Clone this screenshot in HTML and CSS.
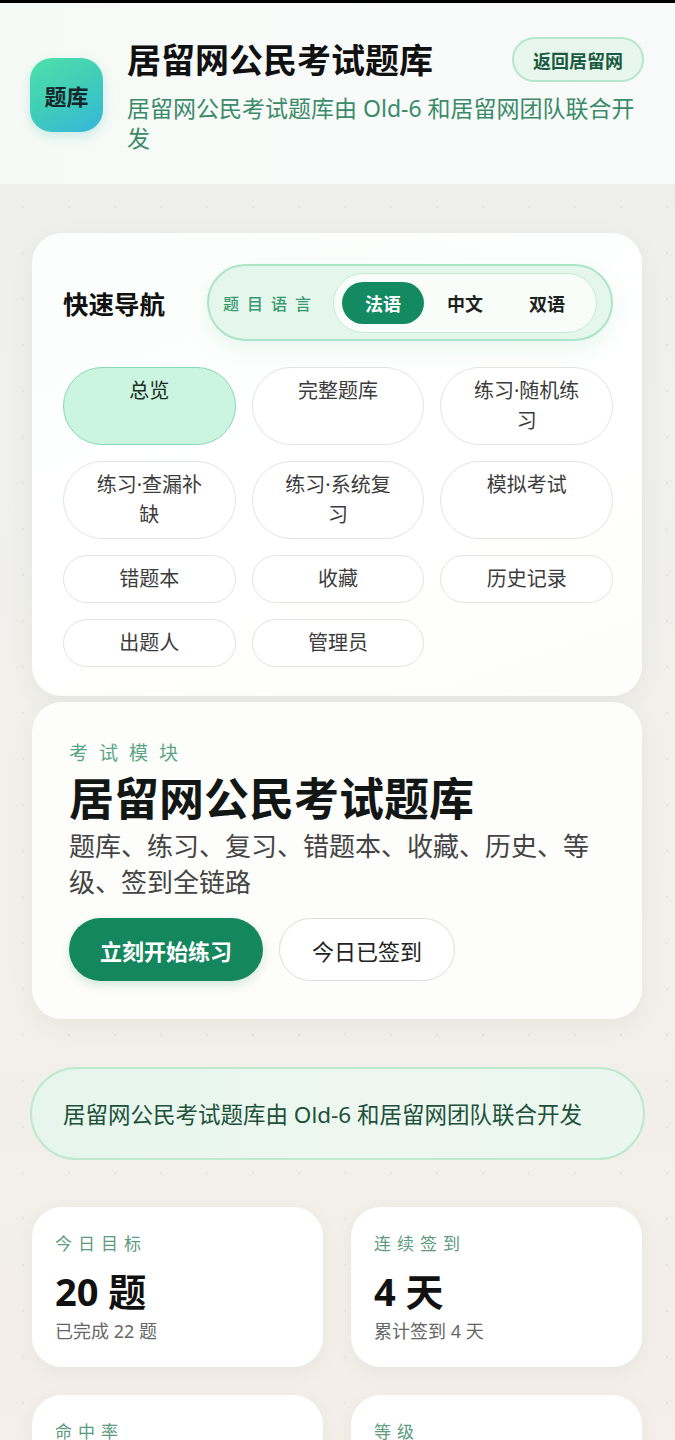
FILE: index.html
```html
<!DOCTYPE html>
<html lang="zh-CN">
<head>
    <meta charset="UTF-8">
    <meta name="viewport" content="width=device-width, initial-scale=1.0">
    <title>居留网公民考试题库</title>
    <link rel="stylesheet" href="styles.css">
</head>
<body>
    <header class="site-header">
        <div class="logo">题库</div>
        <div class="header-text">
            <div class="title-row">
                <h1>居留网公民考试题库</h1>
                <a class="back-btn" href="#">返回居留网</a>
            </div>
            <p class="subtitle">居留网公民考试题库由 Old-6 和居留网团队联合开发</p>
        </div>
    </header>

    <main class="page">
        <section class="card nav-card">
            <div class="nav-head">
                <h2>快速导航</h2>
                <div class="lang-box">
                    <span class="lang-label">题目语言</span>
                    <div class="lang-switch">
                        <button class="lang-btn active">法语</button>
                        <button class="lang-btn">中文</button>
                        <button class="lang-btn">双语</button>
                    </div>
                </div>
            </div>
            <div class="nav-grid">
                <a class="nav-btn active" href="#">总览</a>
                <a class="nav-btn" href="#">完整题库</a>
                <a class="nav-btn" href="#">练习·随机练习</a>
                <a class="nav-btn" href="#">练习·查漏补缺</a>
                <a class="nav-btn" href="#">练习·系统复习</a>
                <a class="nav-btn" href="#">模拟考试</a>
                <a class="nav-btn" href="#">错题本</a>
                <a class="nav-btn" href="#">收藏</a>
                <a class="nav-btn" href="#">历史记录</a>
                <a class="nav-btn" href="#">出题人</a>
                <a class="nav-btn" href="#">管理员</a>
            </div>
        </section>

        <section class="card hero-card">
            <div class="hero-label">考试模块</div>
            <h2 class="hero-title">居留网公民考试题库</h2>
            <p class="hero-desc">题库、练习、复习、错题本、收藏、历史、等级、签到全链路</p>
            <div class="hero-actions">
                <button class="btn-primary">立刻开始练习</button>
                <button class="btn-outline">今日已签到</button>
            </div>
        </section>

        <div class="banner">居留网公民考试题库由 Old-6 和居留网团队联合开发</div>

        <section class="stats">
            <div class="stat-card">
                <div class="stat-label">今日目标</div>
                <div class="stat-value">20 题</div>
                <div class="stat-sub">已完成 22 题</div>
            </div>
            <div class="stat-card">
                <div class="stat-label">连续签到</div>
                <div class="stat-value">4 天</div>
                <div class="stat-sub">累计签到 4 天</div>
            </div>
            <div class="stat-card">
                <div class="stat-label">命中率</div>
                <div class="stat-value">92%</div>
                <div class="stat-sub">累计答题 120 题</div>
            </div>
            <div class="stat-card">
                <div class="stat-label">等级</div>
                <div class="stat-value">Lv.3</div>
                <div class="stat-sub">距离下一级 80 经验</div>
            </div>
        </section>
    </main>
</body>
</html>
```

FILE: styles.css
```css
* {
    box-sizing: border-box;
}
body {
    margin: 0;
    font-family: "Noto Sans", "Noto Sans CJK SC", sans-serif;
    color: #161c1a;
    background-color: #efefec;
    background-image:
        radial-gradient(rgba(90, 90, 80, 0.08) 1px, transparent 1.6px),
        linear-gradient(180deg, #eeefec 0%, #f1f0eb 50%, #f4eee6 100%);
    background-size: 46px 46px, 100% 100%;
    border-top: 3px solid #000;
}
h1, h2, p {
    margin: 0;
}
a {
    text-decoration: none;
}
button {
    font-family: inherit;
    cursor: pointer;
}

/* header */
.site-header {
    display: flex;
    align-items: center;
    gap: 24px;
    padding: 34px 31px 31px 30px;
    background: linear-gradient(90deg, #f6faf7 0%, #f8fbf9 60%, #f7faf8 100%);
}
.logo {
    flex: none;
    width: 73px;
    height: 74px;
    border-radius: 22px;
    background: linear-gradient(150deg, #4fe0ac 0%, #3fcdb8 50%, #36b6dc 100%);
    display: flex;
    align-items: center;
    justify-content: center;
    font-size: 22px;
    font-weight: 700;
    color: #14262a;
    box-shadow: 0 4px 12px rgba(60, 190, 170, 0.25);
}
.header-text {
    flex: 1;
    min-width: 0;
}
.title-row {
    display: flex;
    align-items: center;
    justify-content: space-between;
    height: 45px;
}
.title-row h1 {
    font-size: 34px;
    font-weight: 700;
    line-height: 44px;
    color: #111;
}
.back-btn {
    height: 45px;
    padding: 0 19px;
    display: flex;
    align-items: center;
    border-radius: 23px;
    background: #e7f7ee;
    border: 2px solid #b8e6cd;
    color: #1b5a40;
    font-size: 18px;
    font-weight: 700;
}
.subtitle {
    margin-top: 11px;
    font-size: 23px;
    line-height: 30px;
    color: #3b8a68;
}

/* page */
.page {
    padding: 49px 33px 40px 32px;
}
.card {
    background: #fff;
    border-radius: 30px;
    box-shadow: 0 6px 24px rgba(60, 80, 70, 0.06);
}

/* quick nav */
.nav-card {
    padding: 31px 29px 29px 31px;
    background: linear-gradient(160deg, #fbfefc 0%, #fff 60%, #fdfdfb 100%);
}
.nav-head {
    display: flex;
    align-items: center;
    justify-content: space-between;
}
.nav-head h2 {
    font-size: 25.5px;
    font-weight: 600;
    color: #111;
}
.lang-box {
    display: flex;
    align-items: center;
    gap: 14px;
    height: 77px;
    padding: 0 14px 0 14px;
    border-radius: 39px;
    background: #e5f7ed;
    border: 2px solid #abe4c6;
    box-shadow: 0 8px 20px rgba(80, 190, 140, 0.12);
}
.lang-label {
    font-size: 16px;
    font-weight: 500;
    letter-spacing: 8px;
    color: #3a9870;
}
.lang-switch {
    display: flex;
    padding: 8px;
    border-radius: 31px;
    background: #f8fdfa;
    border: 1px solid #c6ebd6;
}
.lang-btn {
    width: 82px;
    height: 42px;
    border: none;
    border-radius: 21px;
    background: transparent;
    font-size: 18px;
    font-weight: 700;
    color: #1d2220;
}
.lang-btn.active {
    background: #148a62;
    color: #fff;
}
.nav-grid {
    margin-top: 26px;
    display: grid;
    grid-template-columns: repeat(3, 1fr);
    gap: 16px;
}
.nav-btn {
    padding: 8px 24px;
    border-radius: 40px;
    border: 1px solid #e2e4e2;
    background: #fff;
    text-align: center;
    font-size: 20px;
    line-height: 30px;
    color: #3c3c3c;
}
.nav-btn.active {
    background: #cbf5e0;
    border-color: #84dab1;
    color: #1b2b24;
}

/* hero */
.hero-card {
    margin-top: 6px;
    padding: 38px 37px;
    background: #fdfdfb;
}
.hero-label {
    font-size: 19px;
    line-height: 26px;
    letter-spacing: 11px;
    color: #5ba684;
}
.hero-title {
    margin-top: 6px;
    font-size: 45px;
    line-height: 54px;
    font-weight: 700;
    color: #121715;
}
.hero-desc {
    margin-top: 2px;
    font-size: 26px;
    line-height: 36px;
    color: #444;
}
.hero-actions {
    margin-top: 18px;
    display: flex;
    gap: 16px;
}
.btn-primary {
    height: 63px;
    padding: 0 31px;
    border: none;
    border-radius: 32px;
    background: #14875f;
    color: #fff;
    font-size: 22px;
    font-weight: 700;
    box-shadow: 0 4px 10px rgba(20, 135, 95, 0.18);
}
.btn-outline {
    height: 63px;
    padding: 0 32px;
    border: 1px solid #dcdedc;
    border-radius: 32px;
    background: #fff;
    color: #222;
    font-size: 22px;
}

/* banner */
.banner {
    margin: 48px -3px 0 -2px;
    height: 93px;
    display: flex;
    align-items: center;
    padding: 0 31px;
    border-radius: 47px;
    border: 2px solid #bfe8d0;
    background: linear-gradient(90deg, #e6f6ec 0%, #edf7f0 55%, #eaf6ee 100%);
    font-size: 22.5px;
    color: #21503b;
}

/* stats */
.stats {
    margin-top: 47px;
    display: grid;
    grid-template-columns: 1fr 1fr;
    gap: 28px;
}
.stat-card {
    height: 160px;
    padding: 26px 23px 23px;
    border-radius: 30px;
    background: #fff;
    box-shadow: 0 6px 20px rgba(60, 80, 70, 0.05);
}
.stat-label {
    font-size: 17px;
    line-height: 22px;
    letter-spacing: 6px;
    color: #5e9a80;
}
.stat-value {
    margin-top: 12px;
    font-size: 38px;
    line-height: 48px;
    font-weight: 700;
    color: #111;
}
.stat-sub {
    margin-top: 3px;
    font-size: 18px;
    line-height: 26px;
    color: #666;
}
```
